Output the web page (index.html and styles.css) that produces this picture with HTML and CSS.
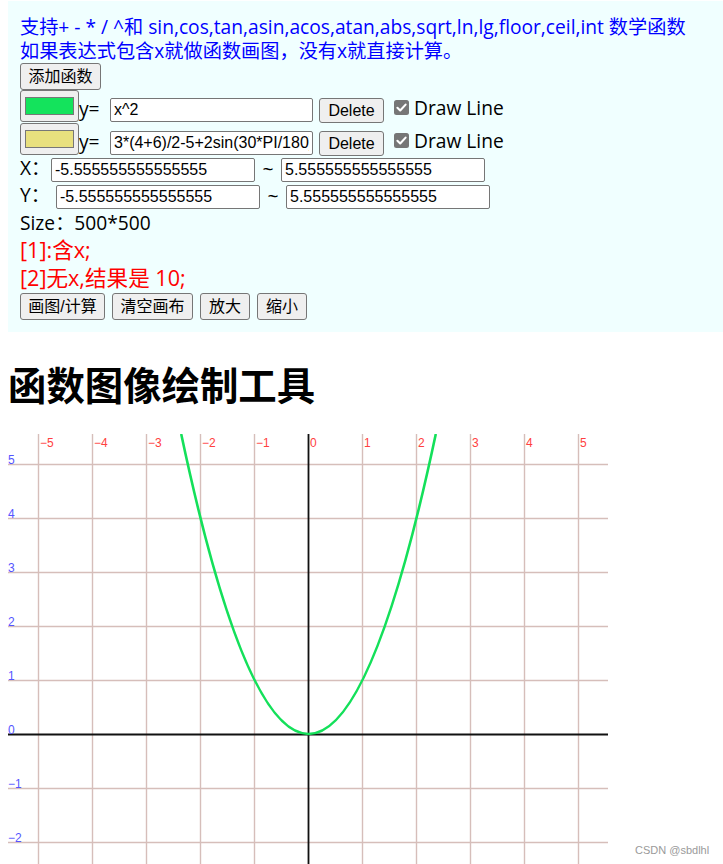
FILE: index.html
```html
<!DOCTYPE html>
<html lang="zh">
<head>
<meta charset="utf-8">
<title>函数图像绘制工具</title>
<link rel="stylesheet" href="styles.css">
</head>
<body>
<div class="page">
  <div class="panel">
    <div class="tip">支持+ - * / ^和 sin,cos,tan,asin,acos,atan,abs,sqrt,ln,lg,floor,ceil,int 数学函数</div>
    <div class="tip">如果表达式包含x就做函数画图，没有x就直接计算。</div>
    <div class="row-add"><button class="btn btn-add">添加函数</button></div>

    <div class="fn-row">
      <span class="color-btn"><span class="swatch swatch-green"></span></span>
      <span class="y-label">y=</span>
      <input class="field fn-field" value="x^2">
      <button class="btn btn-del">Delete</button>
      <span class="check"><svg width="15" height="15" viewBox="0 0 15 15"><rect x="0" y="0" width="15" height="15" rx="2.5" fill="#767676"/><path d="M3.4 7.8 L6.2 10.5 L11.6 4.6" fill="none" stroke="#fff" stroke-width="2.1" stroke-linecap="round" stroke-linejoin="round"/></svg></span>
      <span class="check-label">Draw Line</span>
    </div>

    <div class="fn-row">
      <span class="color-btn"><span class="swatch swatch-yellow"></span></span>
      <span class="y-label">y=</span>
      <input class="field fn-field" value="3*(4+6)/2-5+2sin(30*PI/180)">
      <button class="btn btn-del">Delete</button>
      <span class="check"><svg width="15" height="15" viewBox="0 0 15 15"><rect x="0" y="0" width="15" height="15" rx="2.5" fill="#767676"/><path d="M3.4 7.8 L6.2 10.5 L11.6 4.6" fill="none" stroke="#fff" stroke-width="2.1" stroke-linecap="round" stroke-linejoin="round"/></svg></span>
      <span class="check-label">Draw Line</span>
    </div>

    <div class="range-row">
      <span class="range-label range-x">X：</span>
      <input class="field range-field" value="-5.555555555555555">
      <span class="tilde">~</span>
      <input class="field range-field" value="5.555555555555555">
    </div>
    <div class="range-row">
      <span class="range-label range-y">Y：</span>
      <input class="field range-field" value="-5.555555555555555">
      <span class="tilde">~</span>
      <input class="field range-field" value="5.555555555555555">
    </div>

    <div class="size-line">Size：500*500</div>
    <div class="result">[1]:含x;</div>
    <div class="result">[2]无x,结果是 10;</div>

    <div class="actions">
      <button class="btn btn-draw">画图/计算</button>
      <button class="btn btn-clear">清空画布</button>
      <button class="btn btn-small">放大</button>
      <button class="btn btn-small">缩小</button>
    </div>
  </div>

  <h1 class="title">函数图像绘制工具</h1>

  <svg class="plot" width="600" height="600" viewBox="0 0 600 600">
    <rect x="0" y="0" width="600" height="600" fill="#fff"/>
    <path class="grid" d="M30.5 0V600M84.5 0V600M138.5 0V600M192.5 0V600M246.5 0V600M354.5 0V600M408.5 0V600M462.5 0V600M516.5 0V600M570.5 0V600M0 30.5H600M0 84.5H600M0 138.5H600M0 192.5H600M0 246.5H600M0 354.5H600M0 408.5H600M0 462.5H600M0 516.5H600M0 570.5H600"/>
    <path class="axis" d="M300.5 0V600M0 300.5H600"/>
    <path class="curve" d="M173.2 0 Q300.5 600 427.8 0"/>
    <g class="xlabels">
      <text x="32" y="13">−5</text>
      <text x="86" y="13">−4</text>
      <text x="140" y="13">−3</text>
      <text x="194" y="13">−2</text>
      <text x="248" y="13">−1</text>
      <text x="302" y="13">0</text>
      <text x="356" y="13">1</text>
      <text x="410" y="13">2</text>
      <text x="464" y="13">3</text>
      <text x="518" y="13">4</text>
      <text x="572" y="13">5</text>
    </g>
    <g class="ylabels">
      <text x="0" y="29.5">5</text>
      <text x="0" y="83.5">4</text>
      <text x="0" y="137.5">3</text>
      <text x="0" y="191.5">2</text>
      <text x="0" y="245.5">1</text>
      <text x="0" y="299.5">0</text>
      <text x="0" y="353.5">−1</text>
      <text x="0" y="407.5">−2</text>
      <text x="0" y="461.5">−3</text>
      <text x="0" y="515.5">−4</text>
      <text x="0" y="569.5">−5</text>
    </g>
  </svg>
</div>
<div class="watermark">CSDN @sbdlhl</div>
</body>
</html>
```
FILE: styles.css
```css
html {
  overflow: hidden;
}
body {
  margin: 0;
  background: #fff;
  color: #000;
  font-family: "Open Sans", "Noto Sans CJK SC", sans-serif;
  font-size: 19.2px;
}
.page {
  padding: 1px 0 0 8px;
}
.panel {
  background: #f0ffff;
  padding: 14px 12px 12px 12px;
}
.tip {
  color: #0000ff;
  line-height: 24px;
  height: 24px;
  white-space: nowrap;
}
.row-add {
  height: 27px;
  display: flex;
  align-items: flex-start;
}
.btn {
  box-sizing: border-box;
  height: 27px;
  margin: 0;
  padding: 0;
  background: #efefef;
  border: 1px solid #767676;
  border-radius: 3px;
  color: #000;
  font-family: "Liberation Sans", "Noto Sans CJK SC", sans-serif;
  font-size: 16px;
  line-height: 25px;
  text-align: center;
}
.btn-add {
  width: 81px;
}
.fn-row {
  height: 33px;
  display: flex;
  align-items: flex-start;
}
.color-btn {
  box-sizing: border-box;
  width: 59px;
  height: 32px;
  padding: 6px 0 0 4px;
  background: #efefef;
  border: 1px solid #767676;
  border-radius: 3px;
}
.swatch {
  display: block;
  box-sizing: border-box;
  width: 49px;
  height: 18px;
  border: 1px solid #777;
}
.swatch-green {
  background: #14e35c;
}
.swatch-yellow {
  background: #e8e07e;
}
.y-label {
  width: 31px;
  margin-top: 7px;
  line-height: 24px;
}
.field {
  box-sizing: border-box;
  height: 24px;
  margin: 0;
  padding: 0 3px;
  background: #fff;
  border: 1px solid #767676;
  border-radius: 2px;
  color: #000;
  font-family: "Liberation Sans", sans-serif;
  font-size: 16px;
}
.fn-field {
  width: 203px;
  margin-top: 8px;
}
.btn-del {
  width: 65px;
  height: 25px;
  margin-top: 8px;
  margin-left: 6px;
  line-height: 23px;
}
.check {
  display: block;
  width: 15px;
  height: 15px;
  margin-top: 10px;
  margin-left: 10px;
}
.check svg {
  display: block;
}
.check-label {
  margin-top: 6px;
  margin-left: 5px;
  line-height: 24px;
  white-space: nowrap;
}
.range-row {
  height: 27px;
  display: flex;
  align-items: flex-start;
}
.range-label {
  line-height: 24px;
}
.range-x {
  width: 31px;
}
.range-y {
  width: 36px;
}
.range-field {
  width: 204px;
  margin-top: 2px;
}
.tilde {
  width: 26px;
  text-align: center;
  line-height: 26px;
}
.size-line {
  height: 26px;
  line-height: 26px;
}
.result {
  color: #ff0000;
  font-size: 21.6px;
  height: 28px;
  line-height: 28px;
  white-space: nowrap;
}
.actions {
  height: 28px;
  display: flex;
  align-items: flex-start;
  gap: 7px;
}
.actions .btn {
  margin-top: 1px;
}
.btn-draw {
  width: 85px;
}
.btn-clear {
  width: 81px;
}
.btn-small {
  width: 50px;
}
.title {
  margin: 26px 0;
  font-family: "Noto Sans CJK SC", sans-serif;
  font-size: 38.4px;
  font-weight: bold;
  line-height: 50px;
}
.plot {
  display: block;
}
.grid {
  fill: none;
  stroke: #d6beba;
  stroke-width: 1.4;
}
.axis {
  fill: none;
  stroke: #111;
  stroke-width: 1.8;
}
.curve {
  fill: none;
  stroke: #14e05a;
  stroke-width: 2.6;
}
.xlabels text {
  font-family: "Liberation Sans", sans-serif;
  font-size: 12px;
  fill: #ff4040;
}
.ylabels text {
  font-family: "Liberation Sans", sans-serif;
  font-size: 12px;
  fill: #5555ff;
}
.watermark {
  position: absolute;
  left: 635px;
  top: 843px;
  font-family: "Liberation Sans", sans-serif;
  font-size: 11px;
  line-height: 14px;
  color: #9a9a9a;
}
```
